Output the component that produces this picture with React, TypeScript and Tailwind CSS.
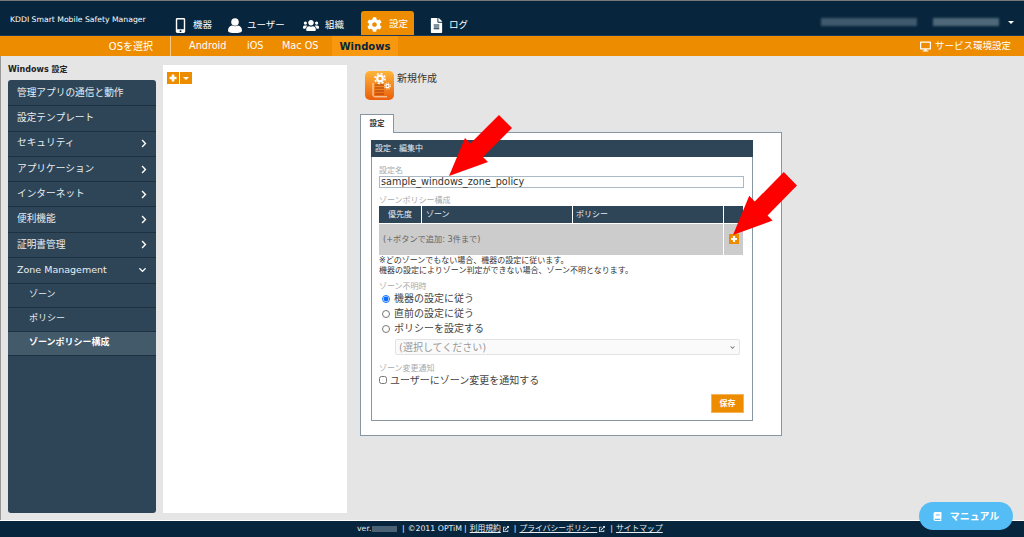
import React from 'react';
import { FaBook, FaChevronDown, FaChevronRight, FaCog, FaDesktop, FaExternalLinkAlt, FaFileAlt, FaMobileAlt, FaUsers } from 'react-icons/fa';

const font = 'font-["DejaVu_Sans","Noto_Sans_CJK_JP",sans-serif]';

const sideItems = [
  { label: '管理アプリの通信と動作' },
  { label: '設定テンプレート' },
  { label: 'セキュリティ', arrow: true },
  { label: 'アプリケーション', arrow: true },
  { label: 'インターネット', arrow: true },
  { label: '便利機能', arrow: true },
  { label: '証明書管理', arrow: true },
];

const subItems = ['ゾーン', 'ポリシー'];

const PlusIcon = ({ className }: { className: string }) => (
  <svg viewBox="0 0 12 12" className={className}>
    <rect width="12" height="12" fill="#ee8c00" />
    <path d="M4.7 2.5h2.6v2.2h2.2v2.6H7.3v2.2H4.7V7.3H2.5V4.7h2.2z" fill="#fff" />
  </svg>
);

const RedArrow = ({ className }: { className: string }) => (
  <svg viewBox="0 0 63 61" preserveAspectRatio="none" className={className}>
    <path d="M0 61 L16 23 L21.4 28.6 L50 0 L63 13 L34 42 L39 47 Z" fill="#ff0000" />
  </svg>
);

const NewPolicyIcon = () => (
  <svg viewBox="0 0 29 29" className="w-[29px] h-[29px]">
    <defs>
      <linearGradient id="tile" x1="0" y1="0" x2="0" y2="1">
        <stop offset="0" stopColor="#ffb53a" />
        <stop offset="1" stopColor="#ea5f0c" />
      </linearGradient>
    </defs>
    <rect width="29" height="29" rx="5" fill="url(#tile)" />
    <path d="M8 12v12c0 1.2 1 1.8 2 1.8h12" fill="none" stroke="#fbe3c4" strokeWidth="1" />
    <path d="M10 14h9M10 17h9M10 20h9M10 23h9" stroke="#a83a08" strokeWidth="1" />
    <circle cx="15" cy="7.5" r="2.8" fill="none" stroke="#fff" strokeWidth="2.2" />
    <circle cx="15" cy="7.5" r="5" fill="none" stroke="#fff" strokeWidth="1.6" strokeDasharray="2 1.93" />
    <circle cx="22.5" cy="15" r="1.6" fill="none" stroke="#fff" strokeWidth="1.3" />
    <circle cx="22.5" cy="15" r="3" fill="none" stroke="#fff" strokeWidth="1" strokeDasharray="1.2 1.15" />
  </svg>
);

const App: React.FC = () => {
  return (
    <div className={`${font} relative w-[1024px] h-[537px] flex flex-col overflow-hidden bg-[#e5e5e5] text-[#333] border-t border-t-[#777]`}>
      <header className="h-[34px] bg-[#07263d] flex shrink-0 text-white">
        <div className="w-[170px] pl-[10px] pt-[12px] text-[7.7px] leading-[14px] whitespace-nowrap">KDDI Smart Mobile Safety Manager</div>
        <nav className="flex items-center h-[34px] pt-[14px] text-[9.5px] whitespace-nowrap">
          <FaMobileAlt className="ml-[5px] w-[11px] h-[15px]" />
          <span className="ml-[7px] w-[19px]">機器</span>
          <svg viewBox="0 0 14 15" className="ml-[16px] w-[14px] h-[15px]" fill="#fff">
            <circle cx="7" cy="4" r="3.8" />
            <path d="M0 12.5C0 9.5 2 8 4 7.6c1.8 1 4.2 1 6 0 2 .4 4 1.9 4 4.9 0 2-3 2.5-7 2.5s-7-.5-7-2.5z" />
          </svg>
          <span className="ml-[5px] w-[38px]">ユーザー</span>
          <FaUsers className="ml-[18px] w-[16px] h-[15px]" />
          <span className="ml-[6px] w-[19px]">組織</span>
          <div className="ml-[17px] w-[53px] h-[24px] self-end pl-[6px] pt-[3px] bg-[#ee8c00] rounded-t-[3px] flex items-center">
            <FaCog className="w-[15px] h-[15px]" />
            <span className="ml-[7px]">設定</span>
          </div>
          <FaFileAlt className="ml-[16px] w-[13px] h-[15px]" />
          <span className="ml-[6px]">ログ</span>
        </nav>
        <div className="ml-auto flex items-center pt-[8px] pr-[10px]">
          <div className="w-[96px] h-[8px] bg-[#3f586b] blur-[1px] mr-[16px]" />
          <div className="w-[66px] h-[8px] bg-[#4f6879] blur-[1px] mr-[9px]" />
          <div className="w-0 h-0 border-x-[3px] border-x-transparent border-t-[3px] border-t-white" />
        </div>
      </header>

      <div className="h-[21px] bg-[#ee8c00] flex items-center shrink-0 text-white text-[9.7px] border-t border-t-[#1d3a5a]">
        <div className="w-[171px] h-full pr-[17px] flex items-center justify-end border-r border-r-[#f9c784] whitespace-nowrap text-[10px]">OSを選択</div>
        <div className="flex h-full items-center pl-[18px] whitespace-nowrap">
          <span className="w-[38px]">Android</span>
          <span className="ml-[20px] w-[16px]">iOS</span>
          <span className="ml-[19px] w-[37px]">Mac OS</span>
          <span className="ml-[13px] w-[66px] h-full flex items-center justify-center bg-[#f7980f] text-[#07263d] font-bold text-[10px]">Windows</span>
        </div>
        <div className="ml-auto flex items-center gap-[4px] pr-[13px] text-[9.5px]">
          <FaDesktop className="w-[11px] h-[11px]" />
          <span>サービス環境設定</span>
        </div>
      </div>

      <main className="flex-1 flex min-h-0 border-l border-l-[#999]">
        <aside className="w-[155px] ml-[7px] pt-[7px] pb-[7px] flex flex-col">
          <h2 className="text-[8px] font-bold leading-[13px] text-[#222] h-[17px]">Windows 設定</h2>
          <div className="flex-1 bg-[#2e4558] rounded-[3px] w-[148px] pt-[1px] text-[#e8edf1] text-[9.7px]">
            {sideItems.map(({ label, arrow }) => (
              <div key={label} className="h-[25.3px] pl-[9px] pr-[8px] flex items-center justify-between border-b border-b-[#1c3141] whitespace-nowrap">
                <span>{label}</span>
                {arrow && <FaChevronRight className="w-[8px] h-[9px] text-white" />}
              </div>
            ))}
            <div className="h-[25.5px] pl-[9px] pr-[9px] flex items-center justify-between border-b border-b-[#1c3141]">
              <span className="text-[9.5px]">Zone Management</span>
              <FaChevronDown className="w-[9px] h-[8px] text-white" />
            </div>
            {subItems.map((s) => (
              <div key={s} className="h-[24px] pl-[21px] flex items-center border-b border-b-[#1c3141] text-[9px]">{s}</div>
            ))}
            <div className="h-[24px] pl-[21px] flex items-center border-b border-b-[#1c3141] text-[9px] font-bold bg-[#435a6b] text-white">ゾーンポリシー構成</div>
          </div>
        </aside>

        <section className="w-[184px] mt-[9px] mb-[7px] bg-white pl-[4px] pt-[7px] flex gap-[1px] items-start shrink-0">
          <PlusIcon className="w-[12px] h-[12px]" />
          <div className="w-[12px] h-[12px] bg-[#ee8c00] flex items-center justify-center">
            <div className="w-0 h-0 border-x-[3px] border-x-transparent border-t-[3px] border-t-white" />
          </div>
        </section>

        <section className="ml-[13px] flex-1 pt-[15px]">
          <div className="flex pl-[5px] h-[43px]">
            <NewPolicyIcon />
            <span className="ml-[3px] mt-[1px] text-[10px] leading-[14px] text-[#333]">新規作成</span>
          </div>
          <div className="w-[34px] h-[19px] -mb-[1px] relative z-10 bg-white border border-[#8796a3] border-b-0 flex items-center justify-center text-[7.5px] font-bold text-[#333]">設定</div>
          <div className="w-[422px] h-[304px] bg-white border border-[#8796a3] pt-[7px] pl-[10px]">
            <div className="w-[382px] h-[281px] border border-[#8796a3] border-t-0 px-[7px] relative">
              <div className="-mx-[8px] h-[17px] bg-[#2e4558] text-[#e8edf1] text-[8px] flex items-center pl-[4px]">設定 - 編集中</div>
              <div className="text-[8px] leading-[10px] text-[#aaa] mt-[9px]">設定名</div>
              <div className="w-[365px] h-[12px] border border-[#a9b9c6] text-[9.7px] leading-[9px] pl-[1px] text-[#333] bg-white">sample_windows_zone_policy</div>
              <div className="text-[8px] leading-[10px] text-[#aaa] mt-[8px]">ゾーンポリシー構成</div>
              <div className="w-[364px] text-[8px]">
                <div className="flex h-[17px] bg-[#2e4558] text-[#e8edf1]">
                  <div className="w-[43px] flex items-center justify-center border-r border-r-white">優先度</div>
                  <div className="w-[151px] pl-[4px] flex items-center border-r border-r-white">ゾーン</div>
                  <div className="w-[151px] pl-[3px] flex items-center border-r border-r-white">ポリシー</div>
                  <div className="flex-1" />
                </div>
                <div className="flex h-[32px] bg-[#cccccc] border-t border-t-white text-[#666]">
                  <div className="w-[345px] pl-[4px] flex items-center border-r border-r-white text-[8.2px]">(+ボタンで追加: 3件まで)</div>
                  <div className="flex-1 flex items-center justify-center pb-[1px]">
                    <PlusIcon className="w-[10px] h-[10px]" />
                  </div>
                </div>
              </div>
              <p className="text-[8px] leading-[10px] text-[#333] mt-[1px]">
                ※どのゾーンでもない場合、機器の設定に従います。<br />
                機器の設定によりゾーン判定ができない場合、ゾーン不明となります。
              </p>
              <div className="text-[8px] leading-[10px] text-[#aaa] mt-[6px]">ゾーン不明時</div>
              <div className="text-[10px] text-[#444] -mt-[1px]">
                {['機器の設定に従う', '直前の設定に従う', 'ポリシーを設定する'].map((t, i) => (
                  <label key={t} className="flex items-center h-[15px] pl-[3px]">
                    <input type="radio" name="zone" defaultChecked={i === 0} className="w-[8px] h-[8px] mr-[4px] m-0 accent-[#0a6cff]" />
                    {t}
                  </label>
                ))}
              </div>
              <div className="ml-[16px] mt-[3px] w-[345px] h-[16px] border border-[#e3e3e3] rounded-[2px] bg-[#fafafa] text-[#999] text-[10px] flex items-center justify-between pl-[3px] pr-[4px]">
                <span>(選択してください)</span>
                <FaChevronDown className="w-[5px] h-[5px] text-[#666]" />
              </div>
              <div className="text-[8px] leading-[10px] text-[#aaa] mt-[9px]">ゾーン変更通知</div>
              <label className="flex items-center h-[12px] text-[10px] text-[#444]">
                <input type="checkbox" className="w-[8px] h-[8px] mr-[3px] m-0" />
                ユーザーにゾーン変更を通知する
              </label>
              <div className="absolute right-[8px] bottom-[7px] w-[33px] h-[19px] bg-[#ee8c00] border border-[#f6b35a] text-white text-[8px] font-bold flex items-center justify-center">保存</div>
            </div>
          </div>
        </section>
      </main>

      <footer className="h-[17px] shrink-0 bg-[#07263d] border-t border-t-white text-[#e8edf1] text-[7.8px] flex items-center pl-[357px] whitespace-nowrap">
        <span className="w-[15px]">ver.</span>
        <span className="w-[25px] h-[6px] bg-[#4a6274]" />
        <span className="ml-[5px]">|</span>
        <span className="ml-[3px]">©2011 OPTiM</span>
        <span className="ml-[2px]">|</span>
        <span className="ml-[3px] underline">利用規約</span>
        <FaExternalLinkAlt className="ml-[2px] w-[6px] h-[6px]" />
        <span className="ml-[5px]">|</span>
        <span className="ml-[3px] underline">プライバシーポリシー</span>
        <FaExternalLinkAlt className="ml-[2px] w-[6px] h-[6px]" />
        <span className="ml-[5px]">|</span>
        <span className="ml-[3px] underline">サイトマップ</span>
      </footer>

      <div className="absolute left-[919px] top-[501px] w-[94px] h-[28px] rounded-[14px] bg-[#55bdf5] text-white text-[10px] font-bold flex items-center justify-center gap-[8px]">
        <FaBook className="w-[9px] h-[9px]" />
        <span>マニュアル</span>
      </div>

      <RedArrow className="absolute left-[449px] top-[114px] w-[63px] h-[61px]" />
      <RedArrow className="absolute left-[733px] top-[171px] w-[64px] h-[63px]" />
    </div>
  );
};

export default App;
